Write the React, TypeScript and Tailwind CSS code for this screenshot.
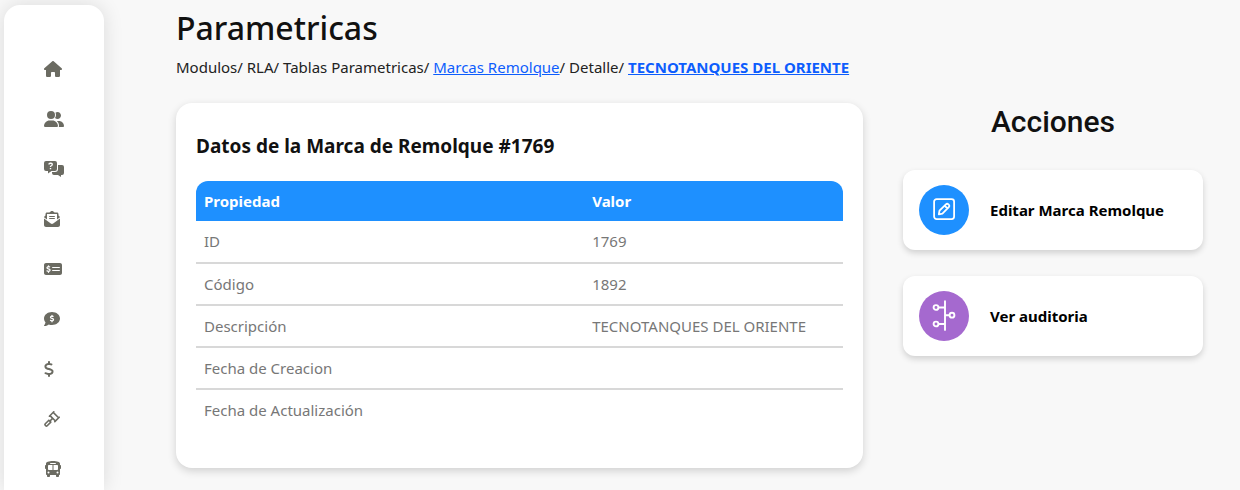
import type { ReactNode } from "react";
import {
  FaBus,
  FaCommentDollar,
  FaDollarSign,
  FaEnvelopeOpenText,
  FaHouse,
  FaMoneyCheckDollar,
  FaUserGroup,
} from "react-icons/fa6";

function MessagesQuestionIcon() {
  return (
    <svg viewBox="0 0 20 16" className="h-4 w-5" fill="currentColor" aria-hidden="true">
      <path
        fillRule="evenodd"
        d="M2 0h9a2 2 0 0 1 2 2v6a2 2 0 0 1-2 2H7.5L4 12.6V10H2a2 2 0 0 1-2-2V2a2 2 0 0 1 2-2ZM4.3 3.6h1.3c0-.5.3-.7.8-.7h.5c.5 0 .7.2.7.6 0 .3-.1.5-.4.7l-1.3.8v1h1.3v-.4l.7-.5c.7-.4 1-1 1-1.7 0-1.1-.8-1.8-1.9-1.8h-.7c-1.2 0-2 .8-2 2ZM5.8 7v1.3h1.4V7H5.8Z"
      />
      <path d="M14 4h4a2 2 0 0 1 2 2v6a2 2 0 0 1-2 2h-1v2l-3-2h-4a2 2 0 0 1-2-2v-1h3a3 3 0 0 0 3-3V4Z" />
    </svg>
  );
}

function GavelIcon() {
  return (
    <svg
      viewBox="0 0 16 16"
      className="size-4"
      fill="none"
      stroke="currentColor"
      strokeWidth="1.6"
      strokeLinejoin="round"
      strokeLinecap="round"
      aria-hidden="true"
    >
      <path d="M5.4 5.2 9.8.8M10.8 10.6l4.4-4.4M9.2 1.4l5.4 5.4M6 4.6l5.4 5.4" />
      <path d="M8.4 7.6 6.2 9.8" />
      <path d="m4.9 9.2 1.9 1.9-3.6 3.6c-.5.5-1 .5-1.5 0l-.4-.4c-.5-.5-.5-1 0-1.5l3.6-3.6Z" />
    </svg>
  );
}

function EditIcon() {
  return (
    <svg
      viewBox="0 0 22 24"
      className="h-6 w-[22px]"
      fill="none"
      stroke="currentColor"
      strokeWidth="1.8"
      strokeLinejoin="round"
      aria-hidden="true"
    >
      <rect x="1.1" y="1.1" width="20" height="20" rx="2.5" />
      <path d="m5.8 16.3.7-3.6 6.4-6.4a1.8 1.8 0 0 1 2.5 0l.4.4a1.8 1.8 0 0 1 0 2.5l-6.4 6.4-3.6.7ZM11.6 7.6l2.9 2.9" />
    </svg>
  );
}

function TimelineIcon() {
  return (
    <svg
      viewBox="0 0 24 32"
      className="h-8 w-6"
      fill="none"
      stroke="currentColor"
      strokeWidth="1.9"
      strokeLinecap="round"
      aria-hidden="true"
    >
      <path d="M13 1.3v28.6M7 7.5h6M13 15.2h4M7 24h6" />
      <circle cx="4" cy="7.5" r="2.4" />
      <circle cx="20" cy="15.2" r="2.4" />
      <circle cx="4" cy="24" r="2.4" />
    </svg>
  );
}

const menu: { label: string; icon: ReactNode }[] = [
  { label: "Inicio", icon: <FaHouse className="h-4 w-[18px]" /> },
  { label: "Usuarios", icon: <FaUserGroup className="h-4 w-5" /> },
  { label: "Consultas", icon: <MessagesQuestionIcon /> },
  { label: "Correspondencia", icon: <FaEnvelopeOpenText className="size-4" /> },
  { label: "Pagos", icon: <FaMoneyCheckDollar className="h-4 w-[18px]" /> },
  { label: "Cobros", icon: <FaCommentDollar className="size-4" /> },
  { label: "Tarifas", icon: <FaDollarSign className="h-4 w-2.5" /> },
  { label: "Procesos", icon: <GavelIcon /> },
  { label: "Transporte", icon: <FaBus className="h-4 w-[18px]" /> },
];

const rows = [
  ["ID", "1769"],
  ["Código", "1892"],
  ["Descripción", "TECNOTANQUES DEL ORIENTE"],
  ["Fecha de Creacion", ""],
  ["Fecha de Actualización", ""],
];

function Sidebar() {
  return (
    <nav className="mt-[5px] ml-1 w-[100px] shrink-0 rounded-t-2xl bg-white pt-[54px] pl-10 shadow-[0_0_20px_rgba(0,0,0,0.12)]">
      <ul className="flex flex-col gap-[30px]">
        {menu.map((item) => (
          <li key={item.label} className="flex h-5 items-center">
            <a href="#" aria-label={item.label} className="text-[#6b6b62]">
              {item.icon}
            </a>
          </li>
        ))}
      </ul>
    </nav>
  );
}

function ActionButton({ label, color, icon }: { label: string; color: string; icon: ReactNode }) {
  return (
    <button
      type="button"
      className="flex h-20 w-full items-center gap-[21px] rounded-xl bg-white px-4 text-left font-bold text-black shadow-[0_3px_6px_rgba(0,0,0,0.16)]"
    >
      <span className={`flex size-[50px] shrink-0 items-center justify-center rounded-full text-white ${color}`}>
        {icon}
      </span>
      {label}
    </button>
  );
}

export default function App() {
  return (
    <div className="flex min-h-screen bg-[#f8f8f8] font-['Segoe_UI','Noto_Sans',sans-serif] text-[15px] text-[#111]">
      <Sidebar />
      <main className="min-w-0 flex-1 pt-2 pr-[37px] pl-[72px]">
        <h1 className="text-[32px] leading-10 font-medium">Parametricas</h1>
        <p className="mt-[7px] leading-6 text-[#222]">
          Modulos/ RLA/ Tablas Parametricas/{" "}
          <a href="#" className="text-[#0d5dfd] underline">
            Marcas Remolque
          </a>
          / Detalle/{" "}
          <a href="#" className="font-bold text-[#0d5dfd] underline">
            TECNOTANQUES DEL ORIENTE
          </a>
        </p>

        <div className="mt-6 flex items-start gap-10">
          <section className="min-w-0 flex-1 rounded-2xl bg-white px-5 pt-7 pb-[38px] shadow-[0_3px_8px_rgba(0,0,0,0.16)]">
            <h2 className="text-[19px] leading-[30px] font-bold">Datos de la Marca de Remolque #1769</h2>
            <table className="mt-5 w-full table-fixed border-separate border-spacing-0 text-left">
              <thead>
                <tr className="h-10 text-white">
                  <th className="w-3/5 rounded-tl-xl bg-[#1e90ff] px-2 font-bold">Propiedad</th>
                  <th className="rounded-tr-xl bg-[#1e90ff] px-2 font-bold">Valor</th>
                </tr>
              </thead>
              <tbody className="text-[#777]">
                {rows.map(([name, value]) => (
                  <tr
                    key={name}
                    className="h-[42px] *:border-b-2 *:border-[#d8d8d8] *:px-2 first:h-[43px] last:h-10 last:*:border-b-0"
                  >
                    <td>{name}</td>
                    <td>{value}</td>
                  </tr>
                ))}
              </tbody>
            </table>
          </section>

          <aside className="w-[300px] shrink-0">
            <h2 className="text-center font-['Roboto',sans-serif] text-[30px] leading-[38px] font-medium">Acciones</h2>
            <div className="mt-[29px] flex flex-col gap-[26px]">
              <ActionButton label="Editar Marca Remolque" color="bg-[#1e90ff]" icon={<EditIcon />} />
              <ActionButton label="Ver auditoria" color="bg-[#a569cf]" icon={<TimelineIcon />} />
            </div>
          </aside>
        </div>
      </main>
    </div>
  );
}
